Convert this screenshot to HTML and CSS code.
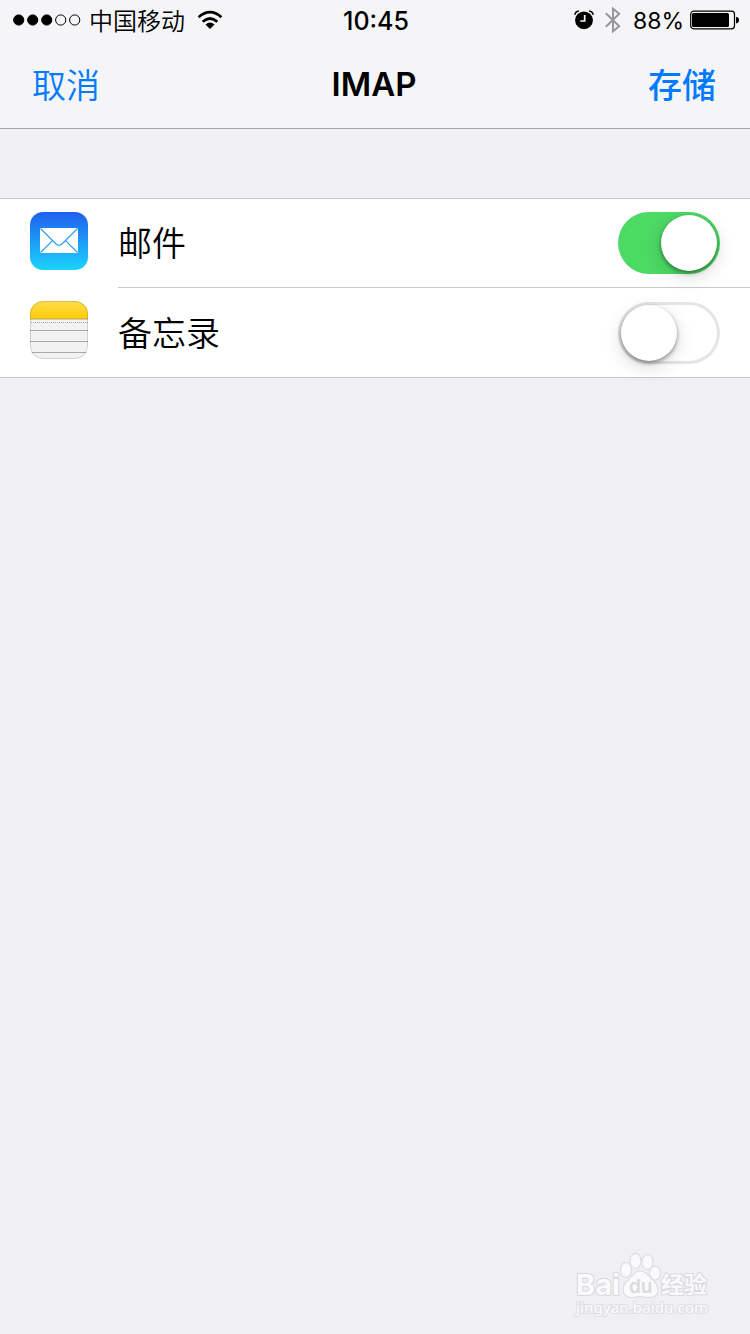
FILE: index.html
```html
<!DOCTYPE html>
<html lang="zh-CN">
<head>
<meta charset="utf-8">
<meta name="viewport" content="width=device-width">
<title>IMAP</title>
<link rel="stylesheet" href="styles.css">
</head>
<body>
<div class="screen">
  <header class="top">
    <div class="status">
      <div class="status-left">
        <svg class="signal" width="68" height="12" viewBox="0 0 68 12" aria-hidden="true">
          <g stroke="#000" stroke-width="1">
            <circle cx="5.7" cy="6" r="5.1"/><circle cx="19.7" cy="6" r="5.1"/><circle cx="33.7" cy="6" r="5.1"/>
            <circle cx="47.7" cy="6" r="5.1" fill="none"/><circle cx="61.7" cy="6" r="5.1" fill="none"/>
          </g>
        </svg>
        <span class="carrier">中国移动</span>
        <svg class="wifi" width="26" height="20" viewBox="0 0 26 20" aria-hidden="true">
          <g fill="none" stroke="#000" stroke-width="2.7">
            <path d="M1.6 7.2Q13 -2.8 24.4 7.2"/>
            <path d="M5.7 11.7Q13 5.3 20.3 11.7"/>
          </g>
          <path d="M8.5 14.4Q13 10.6 17.5 14.4L13 19Z"/>
        </svg>
      </div>
      <time class="clock">10:45</time>
      <div class="status-right">
        <svg width="20" height="20" viewBox="0 0 20 20" aria-hidden="true">
          <circle cx="10" cy="10.3" r="8.9"/>
          <path d="M10.7 5V11H6.3" fill="none" stroke="#f5f5f7" stroke-width="1.7"/>
          <path d="M.8 4.8Q1.4 1.3 5 1M19.2 4.8Q18.6 1.3 15 1" fill="none" stroke="#000" stroke-width="1.5"/>
        </svg>
        <svg class="bluetooth" width="16" height="28" viewBox="0 0 16 28" aria-hidden="true">
          <path d="M.8 7.3L14.2 20.2L8 25.3V2.7L14.2 7.8L.8 20.7" fill="none" stroke="#98989a" stroke-width="2"/>
        </svg>
        <span class="percent">88%</span>
        <svg class="battery" width="49" height="20" viewBox="0 0 49 20" aria-hidden="true">
          <rect x=".7" y="1.2" width="43.8" height="17.6" rx="3" fill="none" stroke="#000" stroke-width="1.2"/>
          <rect x="2" y="3" width="37" height="14" rx="1.5"/>
          <path d="M46 7Q49 7 49 10T46 13.5Z"/>
        </svg>
      </div>
    </div>
    <nav class="nav">
      <button class="nav-btn" type="button">取消</button>
      <h1 class="title">IMAP</h1>
      <button class="nav-btn save" type="button">存储</button>
    </nav>
  </header>
  <main>
    <ul class="list">
      <li class="item">
        <svg class="app-icon" width="58" height="58" viewBox="0 0 58 58" aria-hidden="true">
          <defs>
            <linearGradient id="mail" x2="0" y2="1"><stop stop-color="#1f60ee"/><stop offset="1" stop-color="#1bd4fd"/></linearGradient>
          </defs>
          <rect width="58" height="58" rx="13" fill="url(#mail)"/>
          <rect x="10" y="16" width="38" height="25" rx=".8" fill="#fff"/>
          <path d="M10.5 16.5L25.5 31.5Q29 35 32.5 31.5L47.5 16.5M10.5 40.5L22.2 28.8M47.5 40.5L35.8 28.8" fill="none" stroke="#239bf6" stroke-width="1.1"/>
        </svg>
        <div class="item-body">
          <label class="item-label" for="mail-switch">邮件</label>
          <input class="switch" id="mail-switch" type="checkbox" role="switch" checked>
        </div>
      </li>
      <li class="item">
        <svg class="app-icon" width="58" height="58" viewBox="0 0 58 58" aria-hidden="true">
          <defs>
            <linearGradient id="notes" x2="0" y2="1"><stop stop-color="#ffdc50"/><stop offset="1" stop-color="#ffcc02"/></linearGradient>
            <clipPath id="notes-shape"><rect width="58" height="58" rx="13"/></clipPath>
          </defs>
          <g clip-path="url(#notes-shape)">
            <rect width="58" height="58" fill="#f2f2f2"/>
            <rect width="58" height="18" fill="url(#notes)"/>
            <path d="M0 18H58" stroke="#b9a35d" stroke-width="1.2"/>
            <path d="M1 21.5H58" stroke="#a5a5a5" stroke-dasharray="1 1"/>
            <path d="M0 29.5H58M0 40.5H58M0 51.5H58" stroke="#a9a9a9"/>
          </g>
          <rect x=".5" y=".5" width="57" height="57" rx="12.5" fill="none" stroke="#000" stroke-opacity=".13"/>
        </svg>
        <div class="item-body">
          <label class="item-label" for="notes-switch">备忘录</label>
          <input class="switch" id="notes-switch" type="checkbox" role="switch">
        </div>
      </li>
    </ul>
  </main>
  <footer class="brand">
    <svg width="140" height="70" viewBox="0 0 140 70" role="img" aria-label="Baidu 经验">
      <g class="brand-ink">
        <text class="brand-name" x="4" y="44">Bai</text>
        <g class="paw">
          <ellipse cx="54" cy="19" rx="5" ry="7"/>
          <ellipse cx="63.5" cy="10" rx="5" ry="7"/>
          <ellipse cx="75.5" cy="11" rx="5" ry="7"/>
          <ellipse cx="83" cy="22" rx="5" ry="6.5"/>
          <path d="M68 20.5C63 20.5 61 25 57 29C49 35 50 46 60 46C64 46 65 45 68 45S75 46.5 79 46C88 45 87 35 80 29C76 25 74 20.5 68 20.5Z"/>
        </g>
        <text class="brand-du" x="57" y="42">du</text>
        <text class="brand-cn" x="89" y="42">经验</text>
        <text class="brand-url" x="4" y="62">jingyan.baidu.com</text>
      </g>
    </svg>
  </footer>
</div>
</body>
</html>
```
FILE: styles.css
```css
* {
  box-sizing: border-box;
}

body {
  margin: 0;
  background: #efeff4;
  color: #000;
  font-family: Inter, "Noto Sans CJK SC", sans-serif;
}

.screen {
  display: flex;
  flex-direction: column;
  min-height: 100vh;
}

.top {
  background: #f5f5f7;
  border-bottom: 1px solid #a7a7ab;
}

.status,
.nav {
  display: grid;
  grid-template-columns: 1fr auto 1fr;
  align-items: center;
}

.status {
  height: 40px;
  padding: 0 11px 0 13px;
  font-size: 24px;
  line-height: 40px;
}

.status-left,
.status-right {
  display: flex;
  align-items: center;
}

.status-right {
  justify-content: flex-end;
}

.carrier {
  margin: 0 12px 0 8px;
  padding-top: 3px;
  font-weight: 350;
  line-height: 37px;
}

.clock {
  padding-top: 2px;
  font-size: 25px;
  font-weight: 500;
  line-height: 38px;
}

.bluetooth {
  margin: 0 12px 0 11px;
}

.percent {
  padding-top: 2px;
  font-size: 23px;
  line-height: 38px;
}

.battery {
  margin-left: 6px;
}

.nav {
  height: 88px;
  padding: 0 34px 0 32px;
}

.nav-btn {
  justify-self: start;
  padding: 4px 0 0;
  border: 0;
  background: none;
  color: #007aff;
  font: inherit;
  font-size: 34px;
  font-weight: 350;
  line-height: 48px;
}

.save {
  justify-self: end;
  font-weight: 500;
}

.title {
  margin: 0;
  font-size: 33px;
  font-weight: 600;
  line-height: 48px;
}

.list {
  margin: 69px 0 0;
  padding: 0;
  border-top: 1px solid #c8c7cc;
  background: #fff;
  list-style: none;
}

.item {
  display: flex;
  align-items: flex-start;
  padding-left: 30px;
}

.item-body {
  display: flex;
  flex: 1;
  align-items: center;
  justify-content: space-between;
  height: 89px;
  margin-left: 30px;
  padding-right: 30px;
}

.item:first-child .item-body {
  border-bottom: 1px solid #c8c7cc;
}

.item:last-child {
  border-bottom: 1px solid #c8c7cc;
}

.item-label {
  padding-top: 2px;
  font-size: 34px;
  font-weight: 350;
  line-height: 48px;
}

.app-icon {
  flex: none;
  margin-top: 13px;
}

.switch {
  appearance: none;
  display: flex;
  align-items: center;
  width: 102px;
  height: 62px;
  margin: 0;
  padding: 0 3px;
  border-radius: 31px;
  background: #fff;
  box-shadow: inset 0 0 0 3px #e5e5e5;
}

.switch::before {
  content: "";
  width: 56px;
  height: 56px;
  border-radius: 50%;
  background: #fff;
  box-shadow: 0 2px 4px rgba(0, 0, 0, 0.4), 0 6px 18px rgba(0, 0, 0, 0.15);
}

.switch:checked {
  justify-content: flex-end;
  background: #4cd964;
  box-shadow: none;
}

.brand {
  display: flex;
  justify-content: flex-end;
  margin-top: auto;
  padding: 0 38px 13px 0;
}

.brand-ink {
  fill: #fafafc;
  stroke: #d9d9de;
  stroke-width: 2;
  stroke-linejoin: round;
  paint-order: stroke;
}

.brand-name {
  font-size: 29px;
  font-weight: 700;
}

.brand-du {
  fill: #d9d9de;
  stroke: none;
  font-size: 19px;
  font-weight: 600;
}

.brand-cn {
  font-size: 23px;
  font-weight: 700;
}

.brand-url {
  stroke: #dedee3;
  font-family: "Noto Sans", sans-serif;
  font-size: 15px;
  font-weight: 500;
}
```
